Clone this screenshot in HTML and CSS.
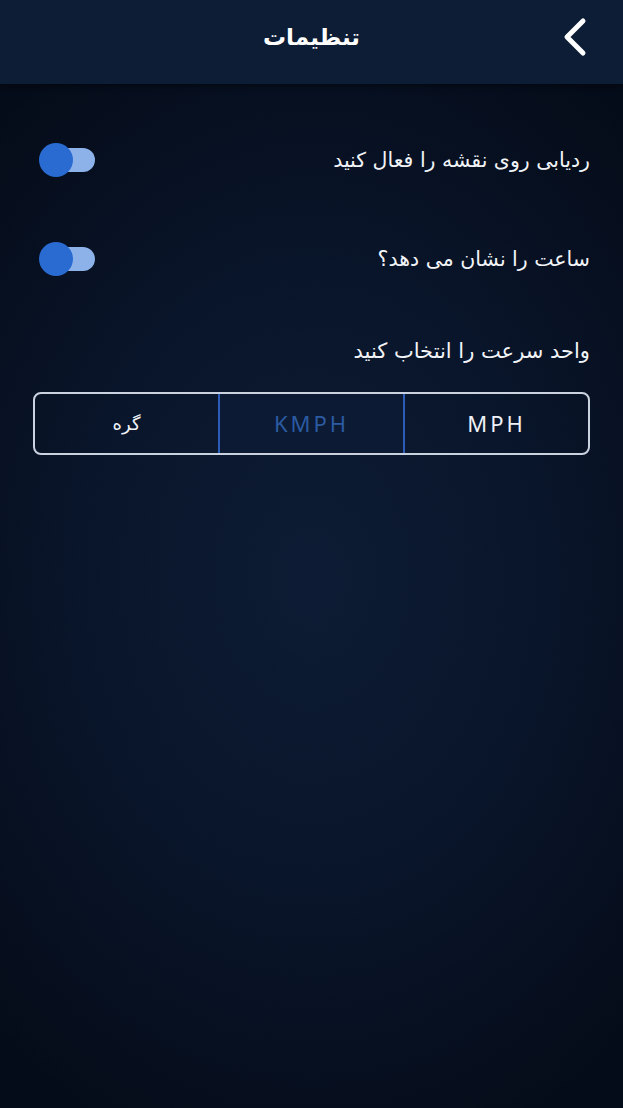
FILE: index.html
```html
<!doctype html>
<html lang="fa" dir="rtl">
<head>
  <meta charset="utf-8">
  <link rel="stylesheet" href="styles.css">
</head>
<body>
  <div class="topbar">
    <h1 class="title">تنظیمات</h1>
    <button class="back" aria-label="back">
      <svg width="28" height="40" viewBox="0 0 28 40">
        <path d="M22 4 L6 20 L22 36" fill="none" stroke="#ffffff" stroke-width="5" stroke-linecap="round" stroke-linejoin="round"/>
      </svg>
    </button>
  </div>

  <div class="content">
    <div class="row">
      <span class="label">ردیابی روی نقشه را فعال کنید</span>
      <span class="toggle"><span class="knob"></span></span>
    </div>
    <div class="row">
      <span class="label">ساعت را نشان می دهد؟</span>
      <span class="toggle"><span class="knob"></span></span>
    </div>

    <div class="section-label">واحد سرعت را انتخاب کنید</div>

    <div class="segments">
      <button class="seg">MPH</button>
      <button class="seg active">KMPH</button>
      <button class="seg fa">گره</button>
    </div>
  </div>
</body>
</html>
```

FILE: styles.css
```css
html, body{
  height: 100%;
}
body{
  margin: 0;
  background: radial-gradient(ellipse 75% 55% at 50% 52%, #0d1c34 0%, #09152a 50%, #050c19 100%);
  color: #ffffff;
  font-family: "DejaVu Sans", "Noto Sans", sans-serif;
}
.topbar{
  height: 84px;
  background: #0d1d36;
  display: flex;
  align-items: center;
  justify-content: center;
  position: relative;
  box-shadow: 0 2px 6px rgba(0,0,0,0.45);
}
.title{
  margin: 0 0 10px 0;
  font-size: 23px;
  font-weight: bold;
}
.back{
  position: absolute;
  right: 34px;
  top: 17px;
  background: none;
  border: none;
  padding: 0;
}
.content{
  padding: 50px 33px 0 33px;
}
.row{
  display: flex;
  justify-content: space-between;
  align-items: center;
  height: 52px;
  margin-bottom: 47px;
}
.label{
  font-size: 20.5px;
  color: #f2f4f8;
}
.section-label{
  font-size: 21px;
  color: #f2f4f8;
  padding-top: 7px;
  height: 30px;
}
.toggle{
  width: 56px;
  height: 34px;
  margin-left: 6px;
  position: relative;
}
.toggle::before{
  content: "";
  position: absolute;
  left: 16px;
  top: 5px;
  width: 40px;
  height: 24px;
  border-radius: 12px;
  background: #8db2ea;
}
.knob{
  position: absolute;
  left: 0;
  top: 0;
  width: 34px;
  height: 34px;
  border-radius: 50%;
  background: #2a6bd1;
}
.segments{
  margin-top: 23px;
  display: flex;
  height: 63px;
  border: 2px solid #c9d2de;
  border-radius: 8px;
  box-sizing: border-box;
  overflow: hidden;
}
.seg{
  flex: 1;
  background: none;
  border: none;
  color: #eef1f6;
  font-family: "Noto Sans", sans-serif;
  font-size: 22px;
  letter-spacing: 3px;
  padding: 0 0 2px 0;
}
.seg.fa{
  font-family: "DejaVu Sans", sans-serif;
  font-size: 18px;
  letter-spacing: 0;
  padding-bottom: 0;
}
.seg.active{
  border: 2px solid #2b5cb8;
  margin: -2px 0;
  background: #0c1a33;
  color: #2b5aa2;
}
```
